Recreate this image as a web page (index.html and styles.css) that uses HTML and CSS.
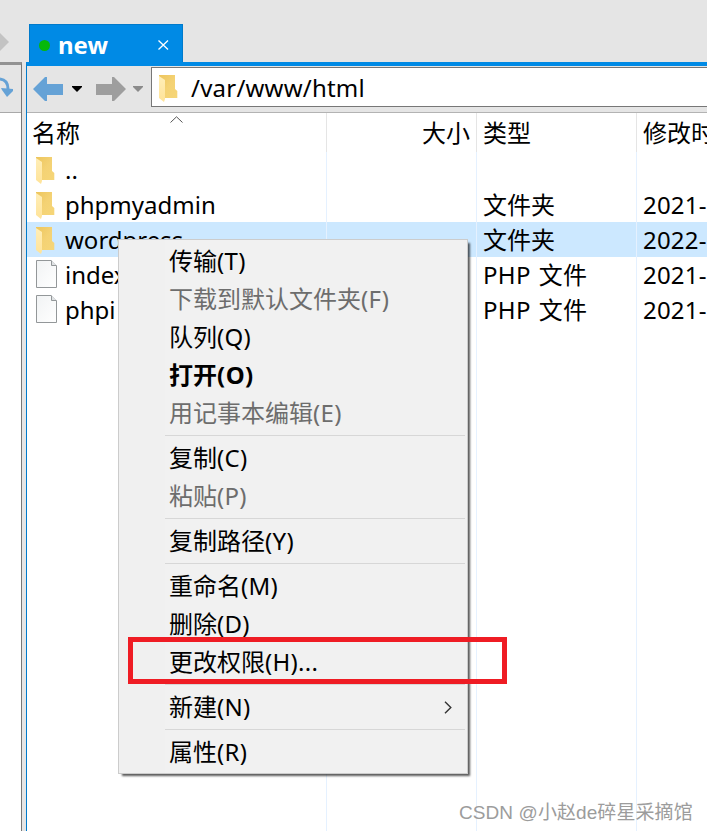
FILE: index.html
```html
<!DOCTYPE html>
<html lang="zh-CN">
<head>
<meta charset="utf-8">
<title>new</title>
<link rel="stylesheet" href="styles.css">
</head>
<body>
<svg width="0" height="0" class="defs">
  <defs>
    <linearGradient id="fold" x1="0" y1="0" x2="1" y2="1"><stop offset="0" stop-color="#edc55c"/><stop offset=".5" stop-color="#f4d274"/><stop offset="1" stop-color="#f6d678"/></linearGradient>
    <linearGradient id="flap" x1="0" y1="0" x2="0" y2="1"><stop offset="0" stop-color="#ffeeb8"/><stop offset="1" stop-color="#ffe398"/></linearGradient>
    <linearGradient id="paper" x1="0" y1="0" x2="1" y2="1"><stop offset="0" stop-color="#f1f3f4"/><stop offset="1" stop-color="#fff"/></linearGradient>
    <symbol id="folder" viewBox="0 0 19 27"><path d="M0 0H16V14L18.300 16V23H5L0 20Z" fill="url(#fold)"/><path d="M0 1L6 5V24L5 27L0 23Z" fill="url(#flap)"/></symbol>
    <symbol id="file" viewBox="0 0 21 28"><path d="M.5 .5H15L20.500 6V27.500H.5Z" fill="url(#paper)" stroke="#939799"/><path d="M15.500 .5V5.500H20.500" fill="#dfe2e4" stroke="#939799"/></symbol>
  </defs>
</svg>
<div class="app">
  <header class="tabs">
    <svg class="tab-scroll" width="9" height="18"><path d="M0 0L9 9L0 18Z" fill="#c3c3c3"/></svg>
    <div class="tab">
      <span class="dot"></span><span class="tab-name">new</span>
      <svg class="close" width="11" height="10"><path d="M.5 .5L10 9.500M10 .5L.5 9.500" stroke="#fff" stroke-width="1.300"/></svg>
    </div>
  </header>
  <div class="body">
    <aside class="side">
      <div class="side-tools"><svg width="14" height="24"><path d="M0 2Q8 3 8 12" fill="none" stroke="#65a2d6" stroke-width="3"/><path d="M1 11L13 12V14L7 20L2 13Z" fill="#65a2d6"/></svg></div>
    </aside>
    <main class="pane">
      <div class="tools">
        <svg class="nav" width="118" height="46">
          <path d="M6 23L18 11H20V18H36V29H20V35H18Z" fill="#65a2d6"/>
          <path d="M45 20H55V21L50 26L45 21Z" fill="#000"/>
          <path d="M69 18H85V11H87L99 23L87 35H85V29H69Z" fill="#9e9e9e"/>
          <path d="M106 20H116V21L111 26L106 21Z" fill="#8b8b8b"/>
        </svg>
        <div class="path"><svg class="path-icon" width="19" height="27"><use href="#folder"/></svg><span>/var/www/html</span></div>
      </div>
      <section class="list">
        <div class="row head">
          <span class="cell">名称<svg class="sort" width="13" height="7"><path d="M.5 6.500L6.500 .8L12.500 6.500" fill="none" stroke="#555"/></svg></span>
          <span class="cell size">大小</span><span class="cell">类型</span><span class="cell">修改时间</span>
        </div>
        <div class="row"><span class="cell"><svg class="ico" width="19" height="27"><use href="#folder"/></svg>..</span><span class="cell"></span><span class="cell"></span><span class="cell"></span></div>
        <div class="row"><span class="cell"><svg class="ico" width="19" height="27"><use href="#folder"/></svg>phpmyadmin</span><span class="cell"></span><span class="cell">文件夹</span><span class="cell">2021-</span></div>
        <div class="row selected"><span class="cell"><svg class="ico" width="19" height="27"><use href="#folder"/></svg>wordpress</span><span class="cell"></span><span class="cell">文件夹</span><span class="cell">2022-</span></div>
        <div class="row"><span class="cell"><svg class="ico doc" width="21" height="28"><use href="#file"/></svg>index</span><span class="cell"></span><span class="cell php">PHP 文件</span><span class="cell">2021-</span></div>
        <div class="row"><span class="cell"><svg class="ico doc" width="21" height="28"><use href="#file"/></svg>phpi</span><span class="cell"></span><span class="cell php">PHP 文件</span><span class="cell">2021-</span></div>
        <div class="row rest"><span class="cell"></span><span class="cell"></span><span class="cell"></span><span class="cell"></span></div>
      </section>
    </main>
  </div>
</div>
<nav class="menu">
  <div class="item">传输<span>(T)</span></div>
  <div class="item off">下载到默认文件夹<span>(F)</span></div>
  <div class="item">队列<span>(Q)</span></div>
  <div class="item bold">打开<span>(O)</span></div>
  <div class="item off">用记事本编辑<span>(E)</span></div>
  <div class="sep"></div>
  <div class="item">复制<span>(C)</span></div>
  <div class="item off">粘贴<span>(P)</span></div>
  <div class="sep"></div>
  <div class="item">复制路径<span>(Y)</span></div>
  <div class="sep"></div>
  <div class="item">重命名<span>(M)</span></div>
  <div class="item">删除<span>(D)</span></div>
  <div class="item">更改权限<span>(H)...</span></div>
  <div class="sep"></div>
  <div class="item">新建<span>(N)</span><svg class="more" width="8" height="13"><path d="M1 .8L6.800 6.500L1 12.200" fill="none" stroke="#333" stroke-width="1.400"/></svg></div>
  <div class="sep"></div>
  <div class="item">属性<span>(R)</span></div>
</nav>
<div class="highlight"></div>
<div class="watermark">CSDN @小赵de碎星采摘馆</div>
</body>
</html>
```
FILE: styles.css
```css
* { box-sizing: border-box; }
body { margin: 0; width: 707px; height: 831px; overflow: hidden; position: relative; background: #e5e5e5; color: #000; font: 24px/35px "Noto Sans", "Noto Sans CJK SC", sans-serif; }
svg { display: block; flex: none; }
.defs { position: absolute; }
.app { display: flex; flex-direction: column; height: 831px; }
.tabs { height: 62px; padding-top: 24px; display: flex; flex: none; }
.tab-scroll { margin: 9px 20px 0 0; }
.tab { width: 154px; height: 38px; background: #008ae5; border: 1px solid #007acb; border-bottom: 0; display: flex; align-items: center; padding-left: 9px; color: #fff; font-weight: 700; }
.dot { width: 11px; height: 11px; border-radius: 50%; background: #06b80a; margin: 3px 8px 0 0; }
.tab-name { width: 103px; padding-top: 2px; }
.close { margin: 3px 0 0 -3px; }
.body { flex: 1; display: flex; min-height: 0; }
.side { width: 22px; margin-right: 4px; border-top: 3px solid #929292; border-right: 1px solid #777; background: #fff; }
.side-tools { height: 48px; background: #e5e5e5; border-bottom: 1px solid #a9a9a9; padding-top: 12px; }
.pane { flex: 1; min-width: 0; border-left: 1px solid #007acb; border-top: 4px solid #008ae5; background: #fff; display: flex; flex-direction: column; }
.tools { height: 47px; flex: none; background: #e5e5e5; border-bottom: 1px solid #b3b3b3; display: flex; }
.nav { margin-right: 6px; }
.path { flex: 1; margin-top: 1px; height: 40px; border: 1px solid #777; border-right: 0; background: #fff; display: flex; align-items: center; padding-left: 7px; letter-spacing: .22px; }
.path-icon { margin: 2px 13px 0 0; }
.list { flex: 1; display: flex; flex-direction: column; min-height: 0; overflow: hidden; }
.row { display: grid; grid-template-columns: 300px 150px 160px 71px; height: 35px; flex: none; }
.cell { border-right: 1px solid #e5f1ff; padding-left: 6px; white-space: nowrap; overflow: hidden; display: flex; align-items: center; }
.cell:first-child { padding-left: 9px; position: relative; }
.cell:last-child { border: 0; letter-spacing: .2px; }
.head { height: 39px; }
.head .cell { border-color: #e5e5e5; }
.head .cell:first-child { padding-left: 5px; }
.head .cell:last-child { letter-spacing: 0; }
.head .size { justify-content: flex-end; padding-right: 6px; }
.php { letter-spacing: .3px; word-spacing: 1.5px; }
.sort { position: absolute; left: 143px; top: 3px; }
.ico { margin: 2px 10px 0 0; }
.doc { margin: -2px 8px 0 0; }
.selected { background: #cce8ff; }
.rest { flex: 1; }
.menu { position: absolute; left: 118px; top: 239px; width: 350px; height: 535px; padding: 3px 2px 1px 46px; border: 1px solid #ccc; background: linear-gradient(90deg, #f0f0f0 46px, #f1f1f1 46px); box-shadow: 3px 3px 2px -1px rgba(0,0,0,.65); }
.item { height: 38px; padding: 0 0 2px 4px; display: flex; align-items: center; line-height: 36px; white-space: nowrap; }
.item span { letter-spacing: .3px; }
.off { color: #6d6d6d; }
.bold { font-weight: 700; }
.bold span { letter-spacing: .5px; }
.sep { height: 7px; padding-top: 2px; }
.sep::before { content: ""; display: block; height: 1px; background: #d7d7d7; }
.more { margin-left: auto; margin-right: 13px; }
.highlight { position: absolute; left: 128px; top: 637px; width: 379px; height: 47px; border: 5px solid #ef1c24; }
.watermark { position: absolute; left: 459px; top: 799px; font: 19px/27px "Liberation Sans", "Noto Sans CJK SC", sans-serif; letter-spacing: .08px; color: #9c9c9c; white-space: nowrap; }
```
